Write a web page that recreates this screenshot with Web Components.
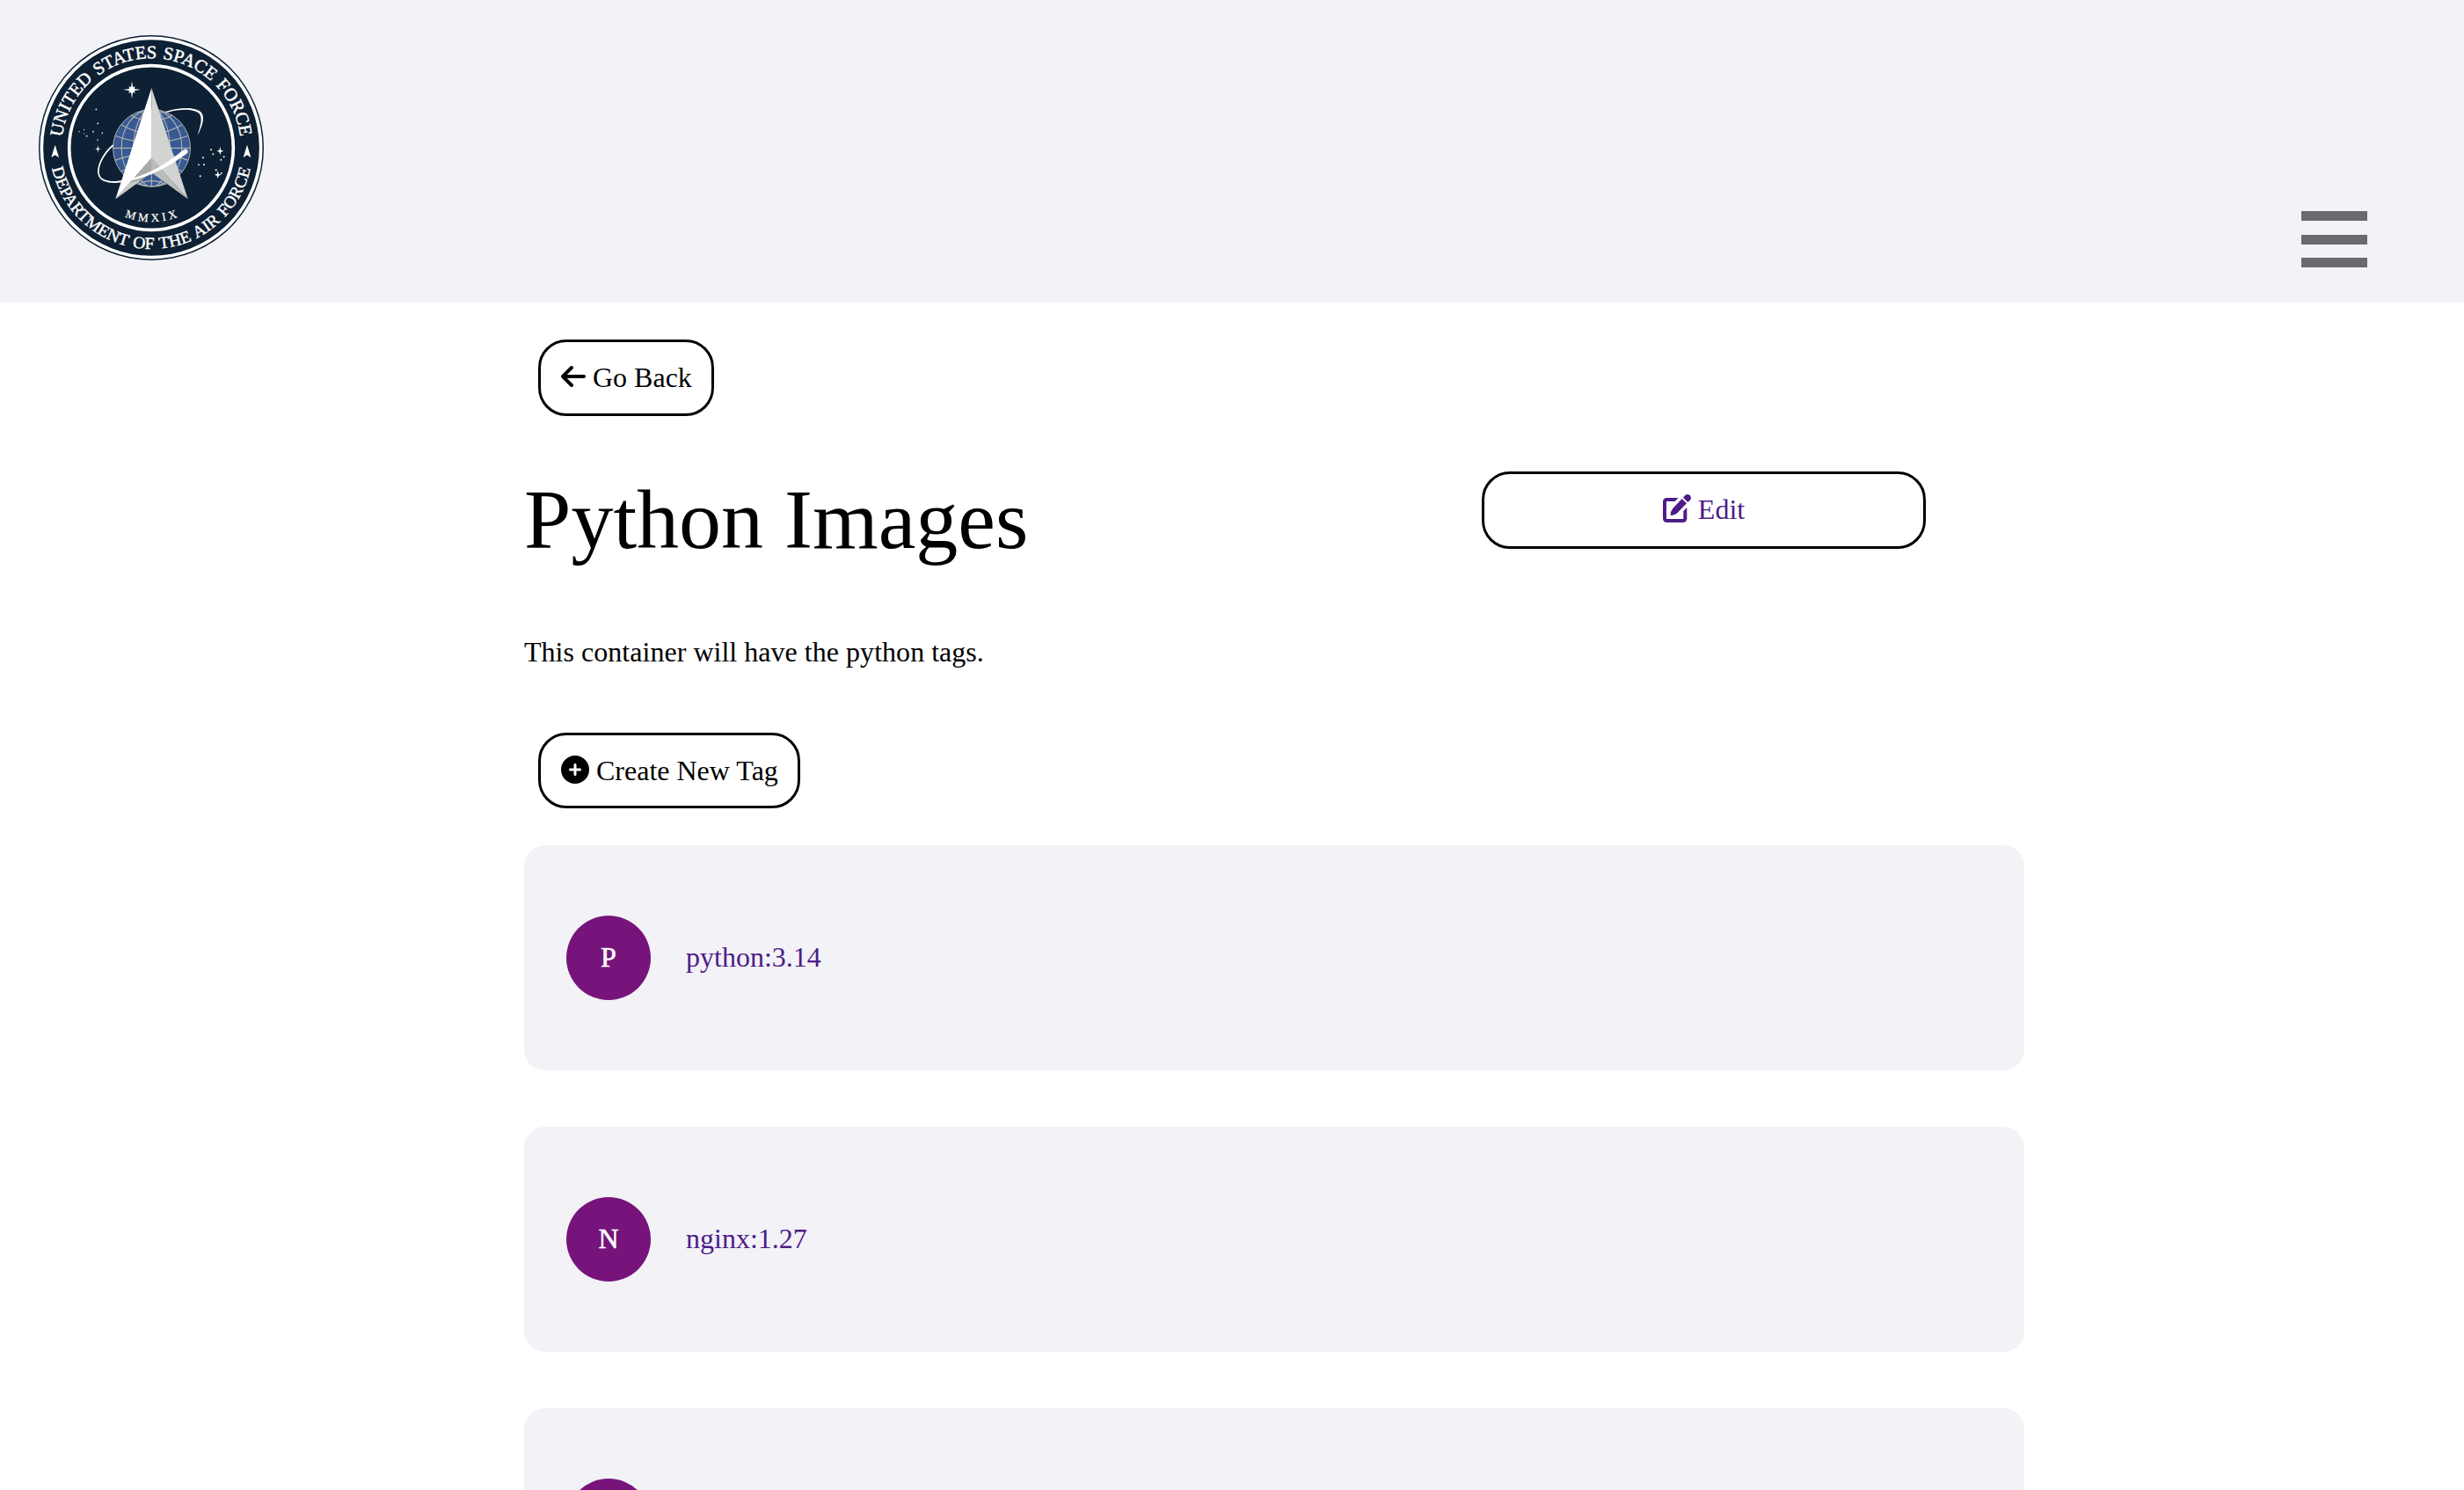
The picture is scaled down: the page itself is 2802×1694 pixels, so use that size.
<!DOCTYPE html>
<html lang="en">
<head>
<meta charset="utf-8">
<title>Python Images</title>
<style>
  html, body { margin: 0; padding: 0; background: #fff; }
  body {
    font-family: "Liberation Serif", "Times New Roman", serif;
    font-size: 32px; line-height: 37px; color: #000;
    height: 1694px; overflow: hidden;
    --panel: #f2f2f7; --link: #4e1c88; --accent: #76147b;
  }
</style>
</head>
<body>
<app-page></app-page>
<script>
const define = (name, html) => {
  const tpl = document.createElement('template');
  tpl.innerHTML = html;
  customElements.define(name, class extends HTMLElement {
    constructor() {
      super();
      this.attachShadow({ mode: 'open' }).appendChild(tpl.content.cloneNode(true));
    }
  });
};

/* Round agency seal; drawn on a 768-unit square, centre 426,414 */
define('space-seal', `
<style>
  :host { display: block; width: 256px; height: 256px; }
  svg { display: block; width: 100%; height: 100%; }
  text { font-family: "Liberation Serif", serif; fill: #fff; }
</style>
<svg viewBox="42 30 768 768">
  <defs>
    <path id="top" d="M122.200 378 A306 306 0 0 1 729.800 378"/>
    <path id="bottom" d="M88 484 A345.200 345.200 0 0 0 764 484"/>
    <path id="year" d="M335.500 650 A253 253 0 0 0 516.500 650"/>
    <clipPath id="globe"><circle cx="427.500" cy="415" r="132"/></clipPath>
  </defs>
  <circle cx="426" cy="414" r="384" fill="#0d2034"/>
  <circle cx="426" cy="414" r="374" fill="none" stroke="#fff" stroke-width="11"/>
  <circle cx="426" cy="414" r="280" fill="none" stroke="#fff" stroke-width="11"/>
  <text font-size="62" word-spacing="4" stroke="#fff" stroke-width="1.400"><textPath href="#top" textLength="886" lengthAdjust="spacingAndGlyphs">UNITED STATES SPACE FORCE</textPath></text>
  <text font-size="57" word-spacing="4" stroke="#fff" stroke-width="1.200"><textPath href="#bottom" textLength="942" lengthAdjust="spacingAndGlyphs">DEPARTMENT OF THE AIR FORCE</textPath></text>
  <text font-size="40" stroke="#fff" stroke-width=".6"><textPath href="#year" textLength="184" lengthAdjust="spacing">MMXIX</textPath></text>
  <g fill="#fff">
    <path d="M98 404L111 447L98 439L85 447Z"/>
    <path d="M753 404L766 447L753 439L740 447Z"/>
  </g>
  <g clip-path="url(#globe)">
    <circle cx="427.500" cy="415" r="132" fill="#375a94"/>
    <g fill="none" stroke="#aeb0ae" stroke-width="3.500">
      <path d="M295 415H560M427 283V547"/>
      <ellipse cx="427.500" cy="415" rx="103" ry="132"/>
      <ellipse cx="427.500" cy="415" rx="62" ry="132"/>
      <path d="M300 372Q427 420 555 372M319 333Q427 398 536 333M352 301Q427 345 503 301M385 290Q427 315 470 290"/>
      <path d="M300 458Q427 410 555 458M319 497Q427 432 536 497M378 540Q427 514 477 540"/>
    </g>
  </g>
  <circle cx="427.500" cy="415" r="132" fill="none" stroke="#aeb0ae" stroke-width="3"/>
  <path d="M427 210L304 589L427 449Z" fill="#fff"/>
  <path d="M427 210L551 589L427 449Z" fill="#d2d4d2"/>
  <path d="M427 449L304 589L427 499Z" fill="#a9aaa6"/>
  <path d="M427 449L551 589L427 499Z" fill="#bbbdb9"/>
  <path d="M350 535L304 589L392 524Z" fill="#c9cac6"/>
  <path d="M296 405C258 438 237 486 249 511C259 530 294 535 338 528" fill="none" stroke="#fff" stroke-width="5"/>
  <path d="M294 529C385 523 462 483 536 421Q546 415 551 424Q552 430 546 435C463 493 389 531 294 532Z" fill="#fff"/>
  <path d="M474 291C525 274 580 275 597 294C611 312 598 344 584 372C592 343 603 314 590 298C573 281 529 280 478 294Z" fill="#fff"/>
  <path d="M360 186L363 207L370 205L369 213L390 216L369 219L371 227L363 225L360 246L357 225L349 227L351 219L330 216L351 213L350 205L357 207Z" fill="#fff"/>
  <g fill="#fff">
    <path d="M244 405L246 416L254 418L246 420L244 431L242 420L234 418L242 416Z"/>
    <path d="M661 411L664 422L673 425L664 428L661 438L658 428L649 425L658 422Z"/>
    <path d="M653 493L656 503L665 506L656 509L653 519L650 509L641 506L650 503Z"/>
    <circle cx="238" cy="283" r="2.800"/><circle cx="244" cy="331" r="2.800"/>
    <circle cx="180" cy="359" r="2"/><circle cx="197" cy="352" r="2"/><circle cx="197" cy="366" r="1.800"/>
    <circle cx="206" cy="374" r="2.500"/><circle cx="228" cy="359" r="2.500"/><circle cx="259" cy="364" r="2.500"/>
    <circle cx="243" cy="387" r="2.500"/>
    <circle cx="630" cy="421" r="3"/><circle cx="637" cy="436" r="3"/><circle cx="674" cy="445" r="3"/>
    <circle cx="664" cy="455" r="3"/><circle cx="603" cy="448" r="3"/><circle cx="588" cy="472" r="2.800"/>
    <circle cx="606" cy="472" r="3"/><circle cx="593" cy="511" r="3"/><circle cx="647" cy="490" r="3.200"/>
    <circle cx="665" cy="501" r="2.800"/>
  </g>
</svg>`);

define('menu-toggle', `
<style>
  :host { display: flex; flex-direction: column; gap: 15.200px; width: 75px; }
  span { display: block; height: 11.200px; background: #6b6970; }
</style>
<span></span><span></span><span></span>`);

define('site-header', `
<style>
  :host { display: flex; justify-content: space-between; align-items: flex-start;
    box-sizing: border-box; height: 344px; padding: 40px 110px 0 44px; background: var(--panel); }
  menu-toggle { margin-top: 200.200px; }
</style>
<space-seal></space-seal><menu-toggle></menu-toggle>`);

define('icon-arrow-left', `
<style>:host{display:inline-block;width:28px;height:32px;vertical-align:-4px}svg{display:block}</style>
<svg width="28" height="32" viewBox="0 0 448 512" fill="currentColor"><path d="M9.400 233.400c-12.500 12.500-12.500 32.800 0 45.300l160 160c12.500 12.500 32.800 12.500 45.300 0s12.500-32.800 0-45.300L109.200 288 416 288c17.700 0 32-14.300 32-32s-14.300-32-32-32l-306.700 0L214.600 118.600c12.500-12.500 12.500-32.800 0-45.300s-32.800-12.500-45.300 0l-160 160z"/></svg>`);

define('icon-plus', `
<style>:host{display:inline-block;width:32px;height:32px;vertical-align:-4px}svg{display:block}</style>
<svg width="32" height="32" viewBox="0 0 512 512" fill="currentColor"><path d="M256 512A256 256 0 1 0 256 0a256 256 0 1 0 0 512zM232 344l0-64-64 0c-13.300 0-24-10.700-24-24s10.700-24 24-24l64 0 0-64c0-13.300 10.700-24 24-24s24 10.700 24 24l0 64 64 0c13.300 0 24 10.700 24 24s-10.700 24-24 24l-64 0 0 64c0 13.300-10.700 24-24 24s-24-10.700-24-24z"/></svg>`);

define('icon-edit', `
<style>:host{display:inline-block;width:32px;height:32px;vertical-align:-4px}svg{display:block}</style>
<svg width="32" height="32" viewBox="0 0 96 96" fill="currentColor">
  <path d="M14 12H53L41 24H12V84H70V57L82 45V82Q82 96 68 96H14Q0 96 0 82V26Q0 12 14 12Z"/>
  <path d="M65 15L81 31L49 64Q42 71 26 72Q26 57 34 48Z"/>
  <path d="M69 11L74 5Q83-4 92 4Q100 13 91 22L85 27Z"/>
</svg>`);

define('pill-button', `
<style>
  :host { display: block; box-sizing: border-box; width: var(--w); height: var(--h, 87px);
    border: 3px solid #000; border-radius: 32px; padding: 22px 0 0 23px; white-space: nowrap; }
  :host([centered]) { padding-left: 0; text-align: center; color: var(--link); }
</style>
<slot></slot>`);

define('page-heading', `
<style>
  :host { display: flex; justify-content: space-between; align-items: flex-start;
    padding-right: 112px; }
  h1 { margin: 0; font-weight: 400; font-size: 96px; line-height: 110px; }
</style>
<h1><slot></slot></h1><slot name="action"></slot>`);

define('tag-card', `
<style>
  :host { display: flex; align-items: center; gap: 40px; box-sizing: border-box; height: 256px;
    flex: none; padding: 0 48px; border-radius: 24px; background: var(--panel); }
  .avatar { display: flex; align-items: center; justify-content: center; box-sizing: border-box;
    width: 96px; height: 96px; padding-bottom: 2px;
    border-radius: 50%; background: var(--accent); color: #fff; -webkit-text-stroke: .6px #fff; }
  .name { color: var(--link); padding-bottom: 2px; }
</style>
<div class="avatar"><slot name="initial"></slot></div><div class="name"><slot></slot></div>`);

define('app-page', `
<style>
  :host { display: block; height: 1694px; overflow: hidden; }
  main { display: flex; flex-direction: column; box-sizing: border-box; width: 1706px; margin-left: 596px; padding-top: 42px; }
  .back { --w: 200px; margin-left: 16px; }
  page-heading { margin-top: 63px; }
  .edit { --w: 505px; --h: 88px; }
  p { margin: 77px 0 0; letter-spacing: .03px; }
  .create { --w: 298px; --h: 86px; margin: 73px 0 42px 16px; }
  .list { display: flex; flex-direction: column; gap: 64px; }
</style>
<site-header></site-header>
<main>
  <pill-button class="back"><icon-arrow-left></icon-arrow-left> Go Back</pill-button>
  <page-heading>Python Images<pill-button class="edit" slot="action" centered><icon-edit></icon-edit> Edit</pill-button></page-heading>
  <p>This container will have the python tags.</p>
  <pill-button class="create"><icon-plus></icon-plus> Create New Tag</pill-button>
  <div class="list">
    <tag-card><span slot="initial">P</span>python:3.14</tag-card>
    <tag-card><span slot="initial">N</span>nginx:1.27</tag-card>
    <tag-card></tag-card>
  </div>
</main>`);
</script>
</body>
</html>
